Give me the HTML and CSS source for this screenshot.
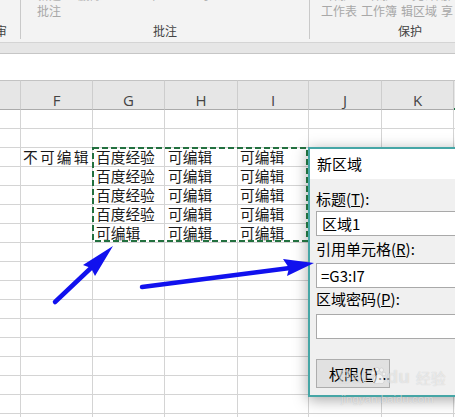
FILE: index.html
```html
<!DOCTYPE html>
<html lang="zh-CN">
<head>
<meta charset="utf-8">
<title>新区域</title>
<link rel="stylesheet" href="styles.css">
</head>
<body>
<div class="app">
  <div class="ribbon">
    <div class="group g-a">
      <div class="r1"></div>
      <div class="r2"></div>
      <div class="glabel">审</div>
    </div>
    <div class="group g-b">
      <div class="r1"><span>新建</span><span>删除</span><span>上</span><span>下一</span><span>显示</span></div>
      <div class="r2"><span>批注</span></div>
      <div class="glabel">批注</div>
    </div>
    <div class="group g-c">
      <div class="r1"><span>保护</span><span>保护</span><span>允许用户</span><span>共享</span></div>
      <div class="r2"><span>工作表</span><span>工作簿</span><span>辑区域</span><span>享</span></div>
      <div class="glabel">保护</div>
    </div>
  </div>
  <div class="band"></div>
  <div class="fbar"></div>

  <div class="sheet">
    <div class="hd"></div><div class="hd">F</div><div class="hd">G</div><div class="hd">H</div><div class="hd">I</div><div class="hd">J</div><div class="hd">K</div><div class="hd hd-sel"></div>

    <div class="c"></div><div class="c"></div><div class="c"></div><div class="c"></div><div class="c"></div><div class="c"></div><div class="c"></div><div class="c"></div>
    <div class="c"></div><div class="c"></div><div class="c"></div><div class="c"></div><div class="c"></div><div class="c"></div><div class="c"></div><div class="c"></div>
    <div class="c"></div><div class="c f">不可编辑</div><div class="c">百度经验</div><div class="c">可编辑</div><div class="c i">可编辑</div><div class="c"></div><div class="c"></div><div class="c"></div>
    <div class="c"></div><div class="c"></div><div class="c">百度经验</div><div class="c">可编辑</div><div class="c i">可编辑</div><div class="c"></div><div class="c"></div><div class="c"></div>
    <div class="c"></div><div class="c"></div><div class="c">百度经验</div><div class="c">可编辑</div><div class="c i">可编辑</div><div class="c"></div><div class="c"></div><div class="c"></div>
    <div class="c"></div><div class="c"></div><div class="c">百度经验</div><div class="c">可编辑</div><div class="c i">可编辑</div><div class="c"></div><div class="c"></div><div class="c"></div>
    <div class="c"></div><div class="c"></div><div class="c">可编辑</div><div class="c">可编辑</div><div class="c i">可编辑</div><div class="c"></div><div class="c"></div><div class="c"></div>
    <div class="c"></div><div class="c"></div><div class="c"></div><div class="c"></div><div class="c"></div><div class="c"></div><div class="c"></div><div class="c"></div>
    <div class="c"></div><div class="c"></div><div class="c"></div><div class="c"></div><div class="c"></div><div class="c"></div><div class="c"></div><div class="c"></div>
    <div class="c"></div><div class="c"></div><div class="c"></div><div class="c"></div><div class="c"></div><div class="c"></div><div class="c"></div><div class="c"></div>
    <div class="c"></div><div class="c"></div><div class="c"></div><div class="c"></div><div class="c"></div><div class="c"></div><div class="c"></div><div class="c"></div>
    <div class="c"></div><div class="c"></div><div class="c"></div><div class="c"></div><div class="c"></div><div class="c"></div><div class="c"></div><div class="c"></div>
    <div class="c"></div><div class="c"></div><div class="c"></div><div class="c"></div><div class="c"></div><div class="c"></div><div class="c"></div><div class="c"></div>
    <div class="c"></div><div class="c"></div><div class="c"></div><div class="c"></div><div class="c"></div><div class="c"></div><div class="c"></div><div class="c"></div>
    <div class="c"></div><div class="c"></div><div class="c"></div><div class="c"></div><div class="c"></div><div class="c"></div><div class="c"></div><div class="c"></div>
    <div class="c"></div><div class="c"></div><div class="c"></div><div class="c"></div><div class="c"></div><div class="c"></div><div class="c"></div><div class="c"></div>
    <div class="c"></div><div class="c"></div><div class="c"></div><div class="c"></div><div class="c"></div><div class="c"></div><div class="c"></div><div class="c"></div>
  </div>

  <div class="dialog">
    <div class="dtitle">新区域</div>
    <div class="dbody">
      <div class="lbl">标题(<u>T</u>):</div>
      <div class="inp inp1">区域1</div>
      <div class="lbl lbl2">引用单元格(<u>R</u>):</div>
      <div class="inp inp2">=G3:I7</div>
      <div class="lbl lbl3">区域密码(<u>P</u>):</div>
      <div class="inp inp3"></div>
      <div class="btn">权限(<u>E</u>)...</div>
    </div>
  </div>

  <svg class="marks" width="455" height="417" viewBox="0 0 455 417">
    <rect x="93" y="148" width="214" height="93" fill="none" stroke="#22703f" stroke-width="2" stroke-dasharray="6 3"/>
    <line x1="55" y1="302" x2="92" y2="267" stroke="#1111ee" stroke-width="4.5" stroke-linecap="round"/>
    <polygon points="113,246 83,265 91,268 95,276" fill="#1111ee"/>
    <line x1="142" y1="287" x2="290" y2="268" stroke="#1111ee" stroke-width="4.5" stroke-linecap="round"/>
    <polygon points="314,263 283,259 289,268 287,276" fill="#1111ee"/>
  </svg>

  <div class="wm">
    <div class="wm1"><span class="bai">Bai</span><svg class="paw" width="16" height="18" viewBox="0 0 16 18"><circle cx="3" cy="6" r="2" /><circle cx="7" cy="2.5" r="2"/><circle cx="11.5" cy="3" r="2"/><circle cx="14" cy="7" r="1.8"/><path d="M3 14c0-4 4-7 6-7s5 3 5 7c0 3-3 3-5 2-2 1-6 1-6-2z"/></svg><span class="bai">du</span><span class="jy">经验</span></div>
    <div class="wm2">jingyan.baidu.com</div>
  </div>
</div>
</body>
</html>
```

FILE: styles.css
```css
* {
  box-sizing: border-box;
  margin: 0;
  padding: 0;
}

body {
  margin: 0;
  width: 455px;
  height: 417px;
  overflow: hidden;
  background: #ffffff;
  font-family: "Noto Sans CJK SC", "Noto Sans", sans-serif;
}

.app {
  position: relative;
  width: 455px;
  height: 417px;
  overflow: hidden;
}

/* ribbon */
.ribbon {
  display: flex;
  height: 43px;
  background: #f3f3f3;
  border-bottom: 1px solid #d4d4d4;
  overflow: hidden;
  font-size: 12px;
}

.group {
  flex: none;
  display: flex;
  flex-direction: column;
  height: 39px;
  border-right: 1px solid #c9c9c9;
}

.g-a { width: 21px; }
.g-b { width: 289px; }
.g-c { width: 200px; border-right: none; }

.r1 {
  display: flex;
  height: 12px;
  margin-top: -11px;
  line-height: 12px;
  color: #b4b4b4;
  white-space: nowrap;
}

.r2 {
  display: flex;
  height: 14px;
  margin-top: 3px;
  line-height: 14px;
  color: #a8a8a8;
  white-space: nowrap;
}

.g-b .r1 { padding-left: 16px; gap: 17px; }
.g-b .r2 { padding-left: 16px; }
.g-c .r1 { padding-left: 18px; gap: 18px; }
.g-c .r2 { padding-left: 11px; gap: 4px; }

.glabel {
  margin-top: auto;
  height: 15px;
  line-height: 14px;
  padding-bottom: 1px;
  text-align: center;
  color: #444444;
  white-space: nowrap;
}

.g-a .glabel {
  text-align: left;
  margin-left: -5px;
}

.band {
  height: 11px;
  background: #e6e6e6;
  border-bottom: 1px solid #c6c6c6;
}

.fbar {
  height: 26px;
  background: #ffffff;
}

/* sheet */
.sheet {
  display: grid;
  grid-template-columns: 21px 72px 72px 73px 71px 73px 72px 40px;
  grid-template-rows: 30px;
  grid-auto-rows: 19px;
  font-size: 14.7px;
  color: #1a1a1a;
}

.hd {
  background: #e6e6e6;
  border-top: 1px solid #c3c3c3;
  border-bottom: 1px solid #ababab;
  border-right: 1px solid #cdcdcd;
  font-family: "Open Sans", "Noto Sans", sans-serif;
  font-size: 15px;
  color: #444444;
  text-align: center;
  padding-top: 11px;
  line-height: 17px;
}

.hd-sel {
  border-bottom: 2px solid #217346;
}

.c {
  border-right: 1px solid #d4d4d4;
  border-bottom: 1px solid #d4d4d4;
  line-height: 18px;
  padding-left: 3px;
  white-space: nowrap;
}

.c.f {
  padding-left: 2px;
  letter-spacing: 2.2px;
}

.c.i { padding-left: 2px; }

/* dialog */
.dialog {
  position: absolute;
  left: 308px;
  top: 147px;
  width: 200px;
  height: 250px;
  border: 2px solid #46a6a6;
  background: #f0f0f0;
  box-shadow: 0 3px 14px rgba(0, 0, 0, 0.35);
  font-size: 15px;
  color: #000000;
}

.dtitle {
  height: 30px;
  line-height: 30px;
  padding-left: 7px;
  background: #ffffff;
}

.dbody {
  padding: 10px 0 0 6px;
}

.lbl {
  height: 20px;
  line-height: 20px;
  white-space: nowrap;
}

.lbl2 { margin-top: 3px; }
.lbl3 { margin-top: 1px; }

.inp {
  height: 25px;
  border: 1px solid #a9a9a9;
  background: #ffffff;
  line-height: 23px;
  padding-left: 5px;
}

.inp1 { margin-top: 2px; }
.inp2 { margin-top: 4px; padding-left: 4px; }
.inp3 { margin-top: 5px; }

.btn {
  width: 74px;
  height: 29px;
  margin-top: 20px;
  border: 1px solid #adadad;
  background: #e1e1e1;
  line-height: 27px;
  padding-left: 12px;
  white-space: nowrap;
}

/* overlays */
.marks {
  position: absolute;
  left: 0;
  top: 0;
}

.wm {
  position: absolute;
  left: 338px;
  top: 362px;
  color: rgba(255, 255, 255, 0.55);
  text-shadow: 0 0 1px rgba(0, 0, 0, 0.18);
}

.wm1 {
  display: flex;
  align-items: flex-end;
  height: 26px;
}

.bai {
  font-family: "Liberation Sans", sans-serif;
  font-weight: bold;
  font-size: 19px;
  line-height: 22px;
}

.paw {
  fill: rgba(255, 255, 255, 0.55);
  stroke: rgba(0, 0, 0, 0.12);
  stroke-width: 0.6;
  margin: 0 1px 3px 2px;
}

.jy {
  font-size: 15px;
  line-height: 20px;
  margin-left: 6px;
}

.wm2 {
  font-family: "Liberation Sans", sans-serif;
  font-size: 11.5px;
  line-height: 14px;
  margin-top: 4px;
  padding-left: 3px;
}
```
